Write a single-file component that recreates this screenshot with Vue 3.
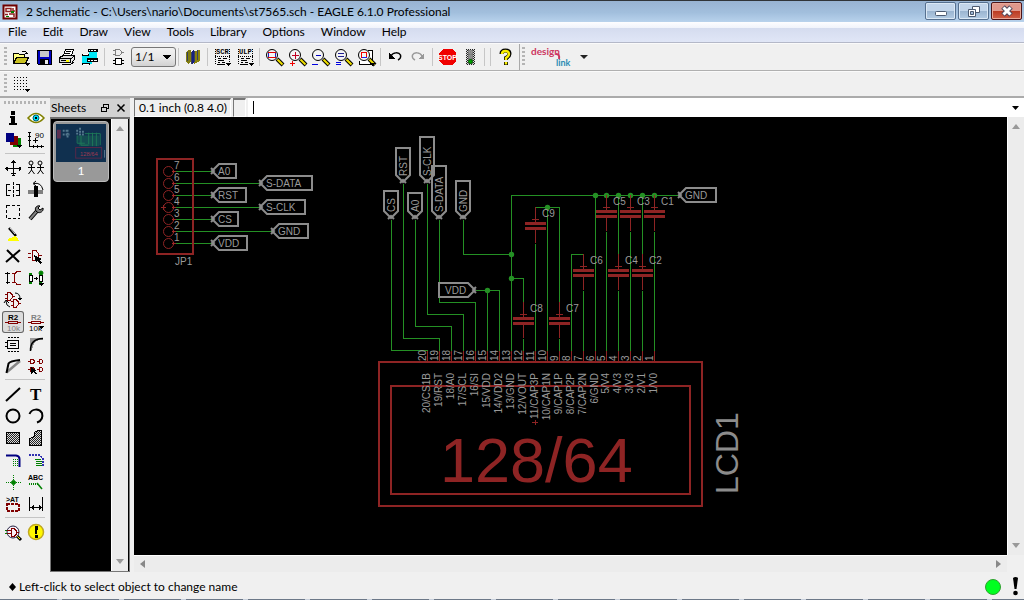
<script setup>
import { ref } from 'vue'

const K = '#000', R = '#800000', G = '#008000', B = '#000080', Y = '#ffff00', GR = '#808080'
const P = (d, stroke = K, fill = 'none', w = 1) => ['path', { d, stroke, fill, 'stroke-width': w }]
const F = (d, fill = K) => ['path', { d, fill }]
const S = (d, stroke = K, fill = 'none', w = 1) => ['path', { d, stroke, fill, 'stroke-width': w, 'shape-rendering': 'auto' }]
const C = (cx, cy, r, stroke = K, fill = 'none', w = 1) => ['circle', { cx, cy, r, stroke, fill, 'stroke-width': w, 'shape-rendering': 'auto' }]
const T = (x, y, text, size, fill = K, family = 'Liberation Sans', weight = 400) =>
  ['text', { x, y, 'font-size': size, fill, 'font-family': `"${family}", sans-serif`, 'font-weight': weight }, text]

const glass = (inner) => [
  S('M14 13L20 19', K, 'none', 4), S('M14.500 13.500L19.500 18.500', '#f0e000', 'none', 2),
  C(9, 9, 5.500, K, '#f4f4f4'), ...inner,
]

const icons = {
  open: [P('M3.500 17.500V7.500H8.500L9.500 8.500H14.500V11.500', K, '#ffff80'), P('M3.500 17.500L6.500 11.500H18.500L15.500 17.500Z', K, '#c8c020'), P('M12 5.500H16M16.500 6V8M15 7.500H18'), F('M15 17h5l-2.500 3z')],
  save: [P('M4.500 4.500H18.500V18.500H5.500L4.500 17.500Z', K, '#0000c0'), F('M7 5h9v6H7z', '#c8c8c8'), F('M7 13h9v6H7z'), F('M12 14h3v4h-3z', '#e8e8e8')],
  print: [P('M7.500 9.500L9.500 3.500H17.500L15.500 9.500', K, '#fff'), P('M10 5.500H15M9 7.500H14'), P('M3.500 11.500L7.500 9.500H18.500L15.500 12.500H3.500ZM3.500 12.500V16.500H14.500V12.500M15.500 16.500L18.500 13.500V9.500', K, '#ddd'), P('M5.500 18.500H14.500L18.500 15.500M5 14.500H13', K), F('M10 14h3v2h-3z', Y)],
  cam: [F('M10 3h8v11h-8zM3 9h10v9H3z', '#00e8f8'), F('M9 3h10v3H9zM8 12h11v4H8zM3 8h7v2H3zM3 17h8v2H3z'), P('M10 4.500H18M9 14.500H18M4 8.500H9M4 18.500H10', '#fff', 'none', 1), P('M11.500 4V5M14.500 4V5M17.500 4V5M11.500 14V15M14.500 14V15')],
  board: [P('M5 4.500H7M5 8.500H7M7.500 3.500H11.500L13.500 5.500V7.500L11.500 9.500H7.500ZM14 6.500H16', GR), P('M7.500 12.500H13.500V18.500H7.500ZM5 14.500H7M5 17.500H7M14 14.500H16M14 17.500H16', K, '#fff')],
  library: [F('M4 7L6 4H9V16L6 18L4 15Z', '#807c10'), F('M9 6L12 4V17L9 18Z', '#182080'), F('M12 5L18 4V15L12 18Z', '#88800c'), P('M5.500 6V15M9.500 6V18M12.500 5V16M15.500 4V14', '#384060')],
  scr: [T(5, 8, 'SCR', 7, K, 'Liberation Mono', 700), P('M5.500 18.500H14', K), ['path', { d: 'M4.500 3V19M18.500 3V16M4 10.500H19', stroke: K, 'stroke-dasharray': '1 1' }], P('M7 12.500H10M12 12.500H16M7 14.500H13M7 16.500H9M11 16.500H14', K), F('M14 17h6l-3 3z')],
  ulp: [T(5, 8, 'ULP', 7, K, 'Liberation Mono', 700), P('M5.500 18.500H14', K), ['path', { d: 'M4.500 3V19M18.500 3V16M4 10.500H19', stroke: K, 'stroke-dasharray': '1 1' }], P('M7 12.500H10M12 12.500H16M7 14.500H13M7 16.500H9M11 16.500H14', K), F('M14 17h6l-3 3z')],
  fit: glass([P('M5.500 6.500H12.500V11.500H5.500Z', '#2020c0'), P('M5 6.500H13M5 11.500H13', '#e00000')]),
  zin: [...glass([P('M9.500 6V13M6 9.500H13', '#c00020')]), P('M6.500 15V20M4 17.500H9', '#f00000')],
  zout: [...glass([P('M7 9.500H12', '#0000c0')]), P('M3 18.500H9', '#0000e0')],
  zredraw: [...glass([P('M6 7.500H12M6 10.500H12', '#202090')]), P('M4 16.500H9M4 18.500H9', '#0000e0')],
  zsel: [P('M4.500 15V18.500H17.500V4.500H13', K, '#fff'), ...glass([P('M6.500 6.500H11.500V11.500H6.500Z', '#f00000'), P('M7 11.500H12', '#2020f0')]), F('M14 17h6l-3 3z')],
  undo: [S('M7 10C9 6 15 6 16.500 9C17 11 16 13 14 14', K, 'none', 1.500), F('M5 7v6h6z')],
  redo: [S('M15 10C13 6 7 6 5.500 9C5 11 6 13 8 14', '#999', 'none', 1.500), F('M17 7v6h-6z', '#999')],
  stop: [F('M7 3H16L20 7V15L16 19H7L3 15V7Z', '#f00000'), ['text', { x: 11.500, y: 14, 'font-size': 7, 'font-weight': 700, fill: '#fff', 'text-anchor': 'middle', 'font-family': '"Liberation Sans", sans-serif' }, 'STOP']],
  light: [F('M7 3h9v16H7z', 'url(#hatch)'), F('M9 4h5v14H9z', '#777'), C(11.500, 6, 1.500, '#999', '#888'), C(11.500, 10.500, 1.500, '#999', '#888'), C(11.500, 15.500, 2, '#006000', '#00a000')],
  help: [
    S('M7.500 8Q7.500 4.500 11.500 4.500T15.500 8Q15.500 10 12 12V14M12 16V19', K, 'none', 4),
    S('M8 8Q8 5 11.500 5T15 8Q15 10 12 12V14M12 16V18.500', '#f8ee00', 'none', 2.500),
  ],
  grid: [['path', { d: 'M4 4.500H19M4 7.500H19M4 10.500H19M4 13.500H19M4 16.500H15', stroke: K, 'stroke-dasharray': '1 2', fill: 'none' }], F('M15 16h5l-2.500 3z')],

  info: [F('M9 4h4v4H9zM8 9h5v7h2v2H7v-2h2v-5H8z')],
  eye: [S('M3 11Q11 2 19 11Q11 20 3 11Z', '#808000', '#fffff0', 1.500), C(11, 11, 3, '#006080', '#00e0f0'), F('M10 10h2v2h-2z')],
  layers: [F('M11 9h8v9h-8z', G), F('M8 7h8v9H8z', R), F('M4 4h8v9H4z', B), F('M14 16h6l-3 3z')],
  dims: [P('M4.500 3V17.500H19M3 3.500H6M3 7.500H6M3 11.500H6M8.500 16V19M12.500 16V19M16.500 16V19M10.500 9V14M8 11.500H13'), T(10, 9, '90', 8, K)],
  move: [P('M11.500 3V19M3 11.500H19'), P('M9.500 6V5.500H13.500V6M9.500 17V16.500H13.500V17M5.500 9.500V13.500M17.500 9.500V13.500'), P('M10 4.500H13M10 18.500H13M4.500 10V13M18.500 10V13')],
  copy: [C(6, 6, 2), C(15, 6, 2), P('M6.500 8V13M15.500 8V13M3 10.500H10M12 10.500H19'), S('M6.500 13L3.500 17M6.500 13L9.500 17M15.500 13L12.500 17M15.500 13L18.500 17')],
  mirror: [P('M8 5.500H4.500V16.500H8M14 5.500H17.500V16.500H14M6 11.500H9M14 11.500H17'), ['path', { d: 'M11.500 3V19', stroke: K, 'stroke-dasharray': '3 1' }]],
  rotate: [F('M3 11h15v4H3z', GR), F('M9 7h4v11H9z'), S('M9 4.500Q16 3 18 11M8 4.500L11 2M8 4.500L11 7')],
  group: [['path', { d: 'M4.500 4.500H17.500V17.500H4.500Z', fill: 'none', stroke: K, 'stroke-dasharray': '3 2' }]],
  wrench: [S('M5 18L12 10', K, 'none', 4), S('M5 18L12 10', GR, 'none', 2), S('M11 10C9 7 12 4 15 5L13 7L15 9L18 7C19 10 15 13 12 11Z', K, GR)],
  change: [S('M7 5L14 13', K, 'none', 2.500), S('M8 5L13 11', '#ddd'), F('M13 13L15 14L17 18H6V16L11 14Z', Y)],
  blank: [],
  del: [S('M5 5L17 17M18 5L4 17', K, 'none', 2)],
  add: [P('M3 8.500H6M3 12.500H6M7.500 5.500H11L13.500 8.500V12L11 15.500H7.500ZM14 10.500H17', R), F('M9 10L17 14L14 15L17 18L15 19L12 16L11 18Z')],
  pinswap: [P('M5.500 5V17M3.500 7V6.500H7.500M3.500 15.500H7.500'), P('M10 6.500H13M10 15.500H13M18.500 4.500H15L12.500 7V14L15 17.500H18.500', R)],
  replace: [P('M5.500 6V17', G, 'none', 3), P('M4.500 8.500H7.500V14.500H4.500Z', K, '#fff'), P('M9 11.500H13M11.500 10V13'), C(16, 6, 2, G, G), P('M15.500 6V18', G, 'none', 3), P('M14.500 8.500H17.500V14.500H14.500Z', K, '#fff'), F('M13 16h6l-3 3z')],
  gateswap: [P('M3 5.500H5M3 9.500H5M5.500 3.500H8L10.500 6V8.500L8 11.500H5.500ZM11 7.500H13M9 12.500H11M9 16.500H11M11.500 10.500H14L16.500 13V15.500L14 18.500H11.500ZM17 14.500H19', R), S('M13 4Q18 4 18 10M4 12Q4 17 8 18M2 14L4 11L7 14'), F('M15 9h5l-2 3z')],
  name: [T(6, 9, 'R2', 8, K, 'Liberation Sans', 700), P('M3 11.500H6M15 11.500H19M6.500 10.500H15.500V12.500H6.500Z', R), T(5, 20, '10k', 8, GR)],
  value: [T(6, 9, 'R2', 8, GR, 'Liberation Sans', 700), P('M3 11.500H6M15 11.500H19M6.500 10.500H15.500V12.500H6.500Z', R), T(4, 20, '10k', 8, K, 'Liberation Sans', 400), F('M14 15h5l-3 3z')],
  smash: [P('M5.500 7.500H16.500V15.500H5.500ZM8 10.500H14M8 12.500H14M3 9.500H5M3 13.500H5'), ['path', { d: 'M6 4.500H17M6 18.500H17', stroke: K, 'stroke-dasharray': '2 1' }]],
  miter: [F('M5 5h13v2h-4q-6 1 -7 10H5z', '#999'), S('M5.500 18Q5 6 18 5.500', K, 'none', 1.500)],
  split: [S('M5 17L18 6', '#888', 'none', 2.500), S('M4.500 18L6.500 8.500Q8 6 18 5', K, 'none', 2)],
  invoke: [P('M3 6.500H5M5.500 4.500H8L9.500 6V7L8 8.500H5.500ZM12 6.500H14M14.500 4.500H16.500L17.500 6V7L16.500 8.500H14.500ZM3 14.500H5M5.500 12.500H8L9.500 14V15L8 16.500H5.500ZM12 14.500H14M14.500 12.500H16.500L17.500 14V15L16.500 16.500H14.500Z', R, 'none', 1), F('M6 12l6 4l-2 0l2 3l-2 0l-2-2l-2 2z')],
  line: [S('M4 18L18 5', K, 'none', 2)],
  text: [T(5, 17, 'T', 17, K, 'Liberation Serif', 700)],
  circle: [C(11, 11, 6.500, K, 'none', 2)],
  arc: [S('M4.500 9A7 7 0 0 1 17 8Q19 15 12 17.500', K, 'none', 2)],
  rect: [P('M4.500 5.500H17.500V16.500H4.500Z', K, 'url(#hatch)')],
  poly: [P('M4.500 18.500V11.500L9.500 9.500V5.500L12.500 3.500H16.500V18.500Z', K, 'url(#hatch)')],
  bus: [S('M4 6.500H14Q17.500 7 17.500 10V18', B, 'none', 2), ['path', { d: 'M11.500 10V18M13.500 10V18M15.500 10V18', stroke: G, 'stroke-dasharray': '1 1' }]],
  net: [['path', { d: 'M4 6H14L18 9V18', stroke: '#3030b0', fill: 'none', 'stroke-dasharray': '2 1', 'stroke-width': 1.500 }], P('M10 10.500H16M11 12.500H17M11 14.500H17M11 16.500H17', G)],
  junction: [['path', { d: 'M11.500 4V19M4 11.500H19', stroke: G, 'stroke-dasharray': '1 1' }], C(11.500, 11.500, 2, G, G)],
  label: [T(3, 9, 'ABC', 7, K, 'Liberation Sans', 700), ['path', { d: 'M4 12.500H13', stroke: G, 'stroke-width': 2, 'stroke-dasharray': '1 1' }], S('M12 12L17 18', G, 'none', 1.500)],
  attr: [T(4, 9, '>AT', 7, K, 'Liberation Sans', 700), ['path', { d: 'M5 11H17V18H5Z', stroke: R, fill: 'none', 'stroke-width': 2, 'stroke-dasharray': '3 1' }]],
  dim: [P('M4.500 4V18M17.500 4V18M5 14.500H18'), F('M5 14.500L9 12V17ZM18 14.500L14 12V17Z')],
  erc: [P('M3 9.500H8M3 12.500H8', G), S('M15 15L19 19', K, 'none', 3), S('M15 15L18 18', Y), C(11, 11, 6, '#202040', '#f8f0f8'), P('M5 9.500H9M5 12.500H9M14 11.500H17M9.500 7.500H12L14.500 10V13L12 15.500H9.500Z', R)],
  errors: [C(11, 11, 7.500, '#c0a820', '#fff800', 1.500), F('M9.500 5h3.500l-1 8h-1.500zM10 14h2.500v2.500H10z')],
}

const tools = [
  ['open', 'Open'], ['save', 'Save'], ['print', 'Print'], ['cam', 'CAM processor'], null,
  ['board', 'Board'], 'select', null, ['library', 'Use library'], null,
  ['scr', 'Script'], ['ulp', 'Run ULP'], null,
  ['fit', 'Zoom to fit'], ['zin', 'Zoom in'], ['zout', 'Zoom out'], ['zredraw', 'Redraw'], ['zsel', 'Zoom select'], null,
  ['undo', 'Undo'], ['redo', 'Redo'], null, ['stop', 'Stop'], ['light', 'Go'], null, null, ['help', 'Help'],
]
const palette = [
  ['info', 'eye', 'layers', 'dims'],
  ['move', 'copy', 'mirror', 'rotate', 'group', 'wrench', 'change', 'blank', 'del', 'add', 'pinswap', 'replace',
    'gateswap', 'blank', 'name', 'value', 'smash', 'miter', 'split', 'invoke'],
  ['line', 'text', 'circle', 'arc', 'rect', 'poly', 'bus', 'net', 'junction', 'label', 'attr', 'dim'],
  ['erc', 'errors'],
]
const menus = ['File', 'Edit', 'Draw', 'View', 'Tools', 'Library', 'Options', 'Window', 'Help']

const header = [
  [7, 171, 211, 25, 'A0'], [6, 183, 259, 53, 'S-DATA'], [5, 195, 211, 35, 'RST'], [4, 207, 259, 46, 'S-CLK'],
  [3, 219, 211, 27, 'CS'], [2, 231, 271, 37, 'GND'], [1, 243, 211, 36, 'VDD'],
]
const tags = [
  ...header.map(([, y, x, len, text]) => ({ x, y, len, text, rot: 0 })),
  { x: 391, y: 219, len: 28, text: 'CS', rot: -90 },
  { x: 403, y: 183, len: 35, text: 'RST', rot: -90 },
  { x: 415, y: 219, len: 26, text: 'A0', rot: -90 },
  { x: 427, y: 183, len: 46, text: 'S-CLK', rot: -90 },
  { x: 439, y: 219, len: 53, text: 'S-DATA', rot: -90 },
  { x: 463, y: 219, len: 38, text: 'GND', rot: -90 },
  { x: 678, y: 195, len: 38, text: 'GND', rot: 0 },
]
const tagPath = (n) => `M1 0L8 -7H${n}V7H8ZM0 -3L3 0L0 3`
const pins = [
  [20, 'CS1B', 427], [19, 'RST', 439], [18, 'A0', 451], [17, 'SCL', 463], [16, 'SI', 475], [15, 'VDD', 487],
  [14, 'VDD2', 499], [13, 'GND', 511], [12, 'VOUT', 523], [11, 'CAP3P', 535], [10, 'CAP1N', 547], [9, 'CAP1P', 559],
  [8, 'CAP2P', 571], [7, 'CAP2N', 583], [6, 'GND', 595], [5, 'V4', 606], [4, 'V3', 618], [3, 'V3', 630], [2, 'V1', 642], [1, 'V0', 654],
]
const caps = [
  ['C9', 535, 219], ['C8', 523, 314], ['C7', 559, 314], ['C6', 583, 266], ['C5', 606, 207],
  ['C3', 630, 207], ['C1', 654, 207], ['C4', 618, 266], ['C2', 642, 266],
]
const dots = [[487, 290], [511, 254], [511, 278], [547, 207], [595, 195], [606, 195], [618, 195], [630, 195], [642, 195], [654, 195]]
const wires = [
  'M391 219V350H427', 'M403 183V338H439V350', 'M415 219V326H451V350', 'M427 183V314H463V350', 'M439 219V302H475V350',
  'M475 290H499V350', 'M487 290V350', 'M463 219V254H511', 'M678 195H511V350', 'M511 278H523V302', 'M523 338V350',
  'M535 207H559V302', 'M547 207V350', 'M535 243V350', 'M559 338V350', 'M583 254H571V350', 'M583 290V350', 'M595 195V350',
  'M606 231V350', 'M630 231V350', 'M654 231V350', 'M618 195V254', 'M642 195V254', 'M618 290V350', 'M642 290V350',
  ...header.map(([, y, x]) => `M175 ${y}H${x}`),
].join('')
const sheet = ref('1/1')
const command = ref('')
</script>

<template>
  <div class="window">
    <header class="titlebar">
      <svg class="appicon" width="16" height="16" viewBox="0 0 16 16">
        <path d="M1.500 1.500H14.500V14.500H1.500Z" fill="#fff" stroke="#700000" stroke-width="2" />
        <path d="M4 4.500H9V7.500H4ZM11 4V7H13M7 10H12V13M3 10.500H6" fill="none" stroke="#902020" stroke-width="1.500" />
        <path d="M9 7h3v2H9zM4 12h3v1H4z" fill="#008000" />
      </svg>
      <h1>2 Schematic - C:\Users\nario\Documents\st7565.sch - EAGLE 6.1.0 Professional</h1>
      <div class="controls">
        <button aria-label="Minimize"><svg width="30" height="16"><rect x="9.500" y="8.500" width="11" height="4" rx="1" fill="#fff" stroke="#4c5a70" /></svg></button>
        <button aria-label="Restore"><svg width="30" height="16"><path d="M13.500 3.500H20.500V9.500H13.500Z" fill="#fff" stroke="#4c5a70" /><path d="M9.500 6.500H16.500V13.500H9.500Z" fill="#fff" stroke="#4c5a70" /><path d="M11.500 8.500H14.500V11.500H11.500Z" fill="#9bb5d2" stroke="#4c5a70" /></svg></button>
        <button class="close" aria-label="Close"><svg width="30" height="16"><path d="M11 4L19 12M19 4L11 12" stroke="#50485c" stroke-width="5" /><path d="M11.500 4.500L18.500 11.500M18.500 4.500L11.500 11.500" stroke="#fff" stroke-width="3" /></svg></button>
      </div>
    </header>

    <nav class="menubar">
      <button v-for="m in menus" :key="m">{{ m }}</button>
    </nav>

    <div class="toolbar main-tools">
      <i class="grip"></i>
      <template v-for="(t, i) in tools" :key="i">
        <i v-if="!t" class="sep"></i>
        <select v-else-if="t === 'select'" v-model="sheet" class="sheet-select" aria-label="Sheet"><option>1/1</option></select>
        <button v-else class="tool" :aria-label="t[1]">
          <svg width="23" height="22" viewBox="0 0 23 22" shape-rendering="crispEdges">
            <component :is="s[0]" v-for="(s, j) in icons[t[0]]" :key="j" v-bind="s[1]">{{ s[2] }}</component>
          </svg>
        </button>
      </template>
      <i class="edge"></i>
      <i class="grip"></i>
      <button class="designlink" aria-label="Design link">
        <svg width="62" height="24" viewBox="0 0 62 24">
          <text x="2" y="10" font-family="Lato, sans-serif" font-weight="700" font-size="10" fill="#cc3560">design</text>
          <text x="27" y="21" font-family="Lato, sans-serif" font-weight="700" font-size="9" fill="#2c8cb4">link</text>
          <path d="M27 9Q31 9 30 14" fill="none" stroke="#cc3560" stroke-width="2" />
          <path d="M51 10h8l-4 4z" fill="#222" />
        </svg>
      </button>
    </div>

    <div class="toolbar sub-tools">
      <i class="grip"></i>
      <button class="tool" aria-label="Grid">
        <svg width="23" height="22" viewBox="0 0 23 22" shape-rendering="crispEdges">
          <component :is="s[0]" v-for="(s, j) in icons.grid" :key="j" v-bind="s[1]" />
        </svg>
      </button>
    </div>

    <div class="work">
      <aside class="palette">
        <i class="hgrip"></i>
        <div v-for="(group, g) in palette" :key="g" class="group">
          <button v-for="(n, i) in group" :key="i" :class="{ pressed: n === 'name' }" :disabled="n === 'blank'" :aria-label="n">
            <svg width="22" height="22" viewBox="0 0 22 22" shape-rendering="crispEdges">
              <component :is="s[0]" v-for="(s, j) in icons[n]" :key="j" v-bind="s[1]">{{ s[2] }}</component>
            </svg>
          </button>
        </div>
      </aside>

      <section class="sheets">
        <div class="dock-title">
          <h2>Sheets</h2>
          <button aria-label="Float"><svg width="10" height="10" shape-rendering="crispEdges"><path d="M3.500 4V1.500H8.500V5.500H7M3 1H9" fill="none" stroke="#000" /><path d="M1.500 4.500H6.500V8.500H1.500ZM1 4H7" fill="none" stroke="#000" /></svg></button>
          <button aria-label="Close panel"><svg width="10" height="10"><path d="M1.500 1.500L8.500 8.500M8.500 1.500L1.500 8.500" stroke="#000" stroke-width="1.500" /></svg></button>
        </div>
        <div class="dock-body">
          <div class="thumbs">
            <button class="thumb">
              <svg viewBox="0 0 52 40">
                <rect width="52" height="40" fill="#10304f" />
                <path d="M2 6V15M4 6V15" stroke="#5c3050" stroke-width="2" />
                <path d="M7 7H11M7 11H14M12 6V14M22 6V12M25 4V12M28 7V12" stroke="#54788e" stroke-width="2" stroke-dasharray="2 1" fill="none" />
                <path d="M22 12V20H30M26 12V22H34M30 10H46V22M34 9V21M38 9V23M42 9V23" stroke="#1d7858" fill="none" />
                <path d="M22 12H45V23H24Z" fill="#1d7858" fill-opacity=".4" />
                <rect x="20.500" y="24.500" width="27" height="11" fill="none" stroke="#582848" />
                <text x="25" y="33" font-size="6" fill="#a03850" font-family="Liberation Sans, sans-serif">128/64</text>
                <path d="M50.500 27V35" stroke="#587890" />
              </svg>
              <span>1</span>
            </button>
          </div>
          <div class="vscroll"><svg width="8" height="5"><path d="M0 5L4 0L8 5Z" fill="#999" /></svg><svg width="8" height="5"><path d="M0 0L4 5L8 0Z" fill="#999" /></svg></div>
        </div>
      </section>

      <main class="editor">
        <div class="command">
          <output class="coords">0.1 inch (0.8 4.0)</output>
          <span class="slot"></span>
          <label class="cmd"><i class="caret"></i><input v-model="command" aria-label="Command"></label>
          <button class="drop" aria-label="Command history"><svg width="7" height="4"><path d="M0 0H7L3.500 4Z" /></svg></button>
        </div>
        <div class="view">
          <div class="canvas">
            <svg class="schematic" width="873" height="438" viewBox="134 117 873 438">
              <defs>
                <pattern id="hatch" width="2" height="2" patternUnits="userSpaceOnUse"><path d="M0 0h2v2H0z" fill="#ddd" /><path d="M0 0h1v1H0zM1 1h1v1H1z" fill="#222" /></pattern>
              </defs>
              <g transform="translate(.5 .5)" fill="none" stroke="#249024" shape-rendering="crispEdges">
                <path :d="wires" />
              </g>
              <g v-for="[x, y] in dots" :key="`${x}-${y}`"><circle :cx="x + 0.5" :cy="y + 0.5" r="2.700" fill="#249024" /></g>

              <g fill="none" stroke="#8e2424" shape-rendering="crispEdges">
                <rect x="157" y="159" width="36" height="95" stroke-width="2" />
                <rect x="379" y="362" width="323" height="144" stroke-width="2" />
                <rect x="391" y="386" width="299" height="108" stroke-width="2" />
                <path d="M161 207.500H166M163.500 205V210M532 422.500H538M535.500 420V425" />
              </g>
              <g v-for="h in header" :key="h[0]">
                <circle cx="168.500" :cy="h[1] + 0.5" r="5" fill="none" stroke="#8e2424" />
                <path :d="`M172 ${h[1] + 0.5}h4M173.500 ${h[1] - 1}v3`" stroke="#a02828" />
                <text x="174" :y="h[1] - 2">{{ h[0] }}</text>
              </g>
              <text x="175" y="265">JP1</text>

              <g v-for="(t, i) in tags" :key="i" :transform="`translate(${t.x} ${t.y}) rotate(${t.rot})`">
                <path :d="tagPath(t.len)" fill="none" stroke="#8c8c8c" stroke-width="2" />
                <text x="7" y="4">{{ t.text }}</text>
              </g>
              <path d="M475 290L468 283H439V297H468ZM476 287L473 290L476 293" fill="none" stroke="#8c8c8c" stroke-width="2" />
              <text x="445" y="294">VDD</text>

              <g v-for="[n, x, y] in caps" :key="n">
                <path :d="`M${x + 0.5} ${y - 12}V${y + 3}M${x + 0.5} ${y + 11}V${y + 24}M${x - 3} ${y + 0.5}h7`" stroke="#8e2424" shape-rendering="crispEdges" />
                <path :d="`M${x - 10} ${y + 3}h21v3h-21zM${x - 10} ${y + 8}h21v3h-21z`" fill="#8e2424" />
                <text :x="x + 7" :y="y - 2">{{ n }}</text>
              </g>

              <g v-for="[n, label, x] in pins" :key="n">
                <path :d="`M${x + 0.5} 351V362`" stroke="#8e2424" shape-rendering="crispEdges" />
                <text :transform="`translate(${x - 1} 361) rotate(-90)`">{{ n }}</text>
                <text :transform="`translate(${x + 3} 373) rotate(-90)`" text-anchor="end">{{ n }}/{{ label }}</text>
              </g>
              <text class="module" x="440" y="482">128/64</text>
              <text class="part" transform="translate(738 494) rotate(-90)">LCD1</text>
            </svg>
          </div>
          <div class="vscroll"><svg width="8" height="5"><path d="M0 5L4 0L8 5Z" fill="#999" /></svg><svg width="8" height="5"><path d="M0 0L4 5L8 0Z" fill="#999" /></svg></div>
          <div class="hscroll"><svg width="5" height="8"><path d="M5 0L0 4L5 8Z" fill="#888" /></svg><svg width="5" height="8"><path d="M0 0L5 4L0 8Z" fill="#888" /></svg></div>
        </div>
      </main>
    </div>

    <footer class="status">
      <svg width="7" height="8"><path d="M3.500 0L7 4L3.500 8L0 4Z" /></svg>
      <span>Left-click to select object to change name</span>
      <svg class="state" width="40" height="22" viewBox="0 0 40 22">
        <circle cx="9" cy="11" r="7.500" fill="#00ff20" stroke="#30a030" />
        <path d="M29 2Q31.500 0 34 2L32.500 13H30.500Z" /><circle cx="31.500" cy="17" r="2.300" />
      </svg>
    </footer>
    <div class="below"></div>
  </div>
</template>

<style>
body { background: #f0f0f0; }
</style>

<style scoped>
.window { display: flex; flex-direction: column; min-height: 100vh; background: #f0f0f0; color: #000; font-family: Lato, "Open Sans", sans-serif; font-size: 12px; line-height: 16px; overflow: hidden; }
button { border: 0; margin: 0; padding: 0; background: none; font: inherit; color: inherit; }
svg { display: block; flex: none; }
h1, h2 { margin: 0; font: inherit; }
.titlebar { display: flex; align-items: center; height: 22px; box-sizing: border-box; padding: 0 2px; border-top: 1px solid #303438; background: linear-gradient(#98b3d2, #a2bfdd 55%, #b8d2ec); }
.titlebar h1 { flex: 1; margin-left: 8px; }
.controls { display: flex; gap: 2px; align-self: flex-start; }
.controls button { width: 31px; height: 18px; box-sizing: border-box; margin-top: 1px; border: 1px solid #56708f; border-radius: 2px; box-shadow: inset 0 0 0 1px #dbe8f5; background: linear-gradient(#c2d5ea 48%, #9ab4d0 50%, #b4cce4); }
.controls svg { margin: 0 auto; }
.controls .close { border-color: #4c1418; box-shadow: inset 0 0 0 1px #e8a898; background: linear-gradient(#e0988c 48%, #ba3a22 50%, #d06048); }
.menubar { display: flex; gap: 16px; height: 21px; box-sizing: border-box; padding: 0 8px; align-items: center; border-bottom: 1px solid #b4b8c8; background: linear-gradient(#fdfdff, #f1f4fb 28%, #d5dcef 32%, #e0e6f6); }
.toolbar { display: flex; align-items: center; box-sizing: border-box; border-top: 1px solid #fafafa; border-bottom: 1px solid #b0b0b0; }
.main-tools { height: 28px; }
.sub-tools { height: 27px; border-bottom: 2px solid #ababab; }
.grip { width: 3px; height: 20px; margin: 0 3px 0 4px; background: repeating-linear-gradient(#b4b4b4 0 2px, transparent 2px 4px); }
.tool { width: 23px; height: 22px; }
.sep { width: 1px; height: 18px; margin: 0 3px 0 2px; background: #c6c6c6; }
.edge { width: 1px; align-self: stretch; margin-left: 2px; background: #aaa; }
.edge + .grip { margin: 0 4px 0 2px; }
.sheet-select { width: 45px; height: 20px; box-sizing: border-box; padding: 0 3px; border: 1px solid #777; border-radius: 3px; appearance: none; font: inherit; color: #000; background-image: linear-gradient(135deg, #000 50%, transparent 51%), linear-gradient(225deg, #000 50%, transparent 51%), linear-gradient(#f2f2f2, #e8e8e8 50%, #d2d2d2); background-size: 4px 4px, 4px 4px, auto; background-position: right 4px center, right 8px center, 0 0; background-repeat: no-repeat; }
.work { display: flex; flex: 1; }
.palette { width: 50px; box-sizing: border-box; padding-left: 2px; }
.hgrip { display: block; width: 42px; height: 3px; margin: 3px 0 3px 2px; background: repeating-linear-gradient(90deg, #b4b4b4 0 2px, transparent 2px 4px); }
.group { display: grid; grid-template-columns: 23px 23px; grid-auto-rows: 22px; }
.group + .group { position: relative; padding-top: 6px; }
.group + .group::before { content: ""; position: absolute; top: 2px; left: 3px; width: 40px; height: 1px; background: #c4c4c4; }
.group button { width: 22px; height: 22px; }
.pressed { border-radius: 3px; box-shadow: inset 0 0 0 1px #666; background: #dcdcdc; }
.sheets { display: flex; flex-direction: column; width: 80px; }
.dock-title { display: flex; align-items: center; height: 19px; padding: 0 4px 0 1px; box-sizing: border-box; background: #d2d2d2; border-top: 1px solid #bbb; }
.dock-title h2 { flex: 1; }
.dock-title button { margin-left: 6px; }
.dock-body { display: flex; flex: 1; box-sizing: border-box; border: 1px solid #777; border-top: 2px solid #707070; background: #000; }
.thumbs { flex: 1; padding: 2px; }
.thumb { display: block; width: 56px; box-sizing: border-box; padding: 2px; border-radius: 4px; border: 1px solid #bbb; background: #999; color: #fff; text-align: center; }
.thumb svg { width: 100%; }
.thumb span { display: block; height: 17px; line-height: 18px; }
.vscroll { display: flex; flex-direction: column; justify-content: space-between; align-items: center; width: 17px; box-sizing: border-box; padding: 7px 0; background: #ececec; border-left: 1px solid #fff; }
.dock-body .vscroll { margin-right: 1px; }
.editor { display: flex; flex-direction: column; flex: 1; min-width: 0; margin-left: 4px; }
.command { display: flex; height: 19px; gap: 2px; }
.coords, .slot { box-sizing: border-box; border: 1px solid #fff; border-top: 2px solid #777; border-left: 1px solid #777; }
.coords { width: 97px; padding-left: 4px; }
.slot { width: 13px; }
.cmd { display: flex; flex: 1; align-items: center; padding-left: 5px; margin-right: -2px; background: #fff; }
.caret { width: 1px; height: 13px; background: #000; }
.cmd input { flex: 1; border: 0; outline: 0; padding: 0; font: inherit; background: transparent; }
.drop { width: 17px; background: #fff; }
.drop svg { margin: 0 auto; }
.view { display: grid; flex: 1; grid-template-columns: 1fr 17px; grid-template-rows: 1fr 17px; }
.canvas { min-width: 0; overflow: hidden; background: #000; }
.schematic { font-family: "Liberation Sans", Arial, sans-serif; font-size: 10px; }
.schematic text { fill: #9a9a9a; }
.schematic .module { font-size: 63px; fill: #8e2424; }
.schematic .part { font-size: 32px; fill: #8c8c8c; }
.hscroll { display: flex; justify-content: space-between; align-items: center; padding: 0 6px; background: #ececec; border-top: 1px solid #fff; box-sizing: border-box; }
.status { display: flex; align-items: center; height: 27px; padding: 2px 0 0 9px; box-sizing: border-box; }
.status span { flex: 1; margin-left: 3px; }
.below { height: 2px; background: repeating-linear-gradient(90deg, #6c7888 0 57px, #c8d0dc 57px 62px); }
</style>
